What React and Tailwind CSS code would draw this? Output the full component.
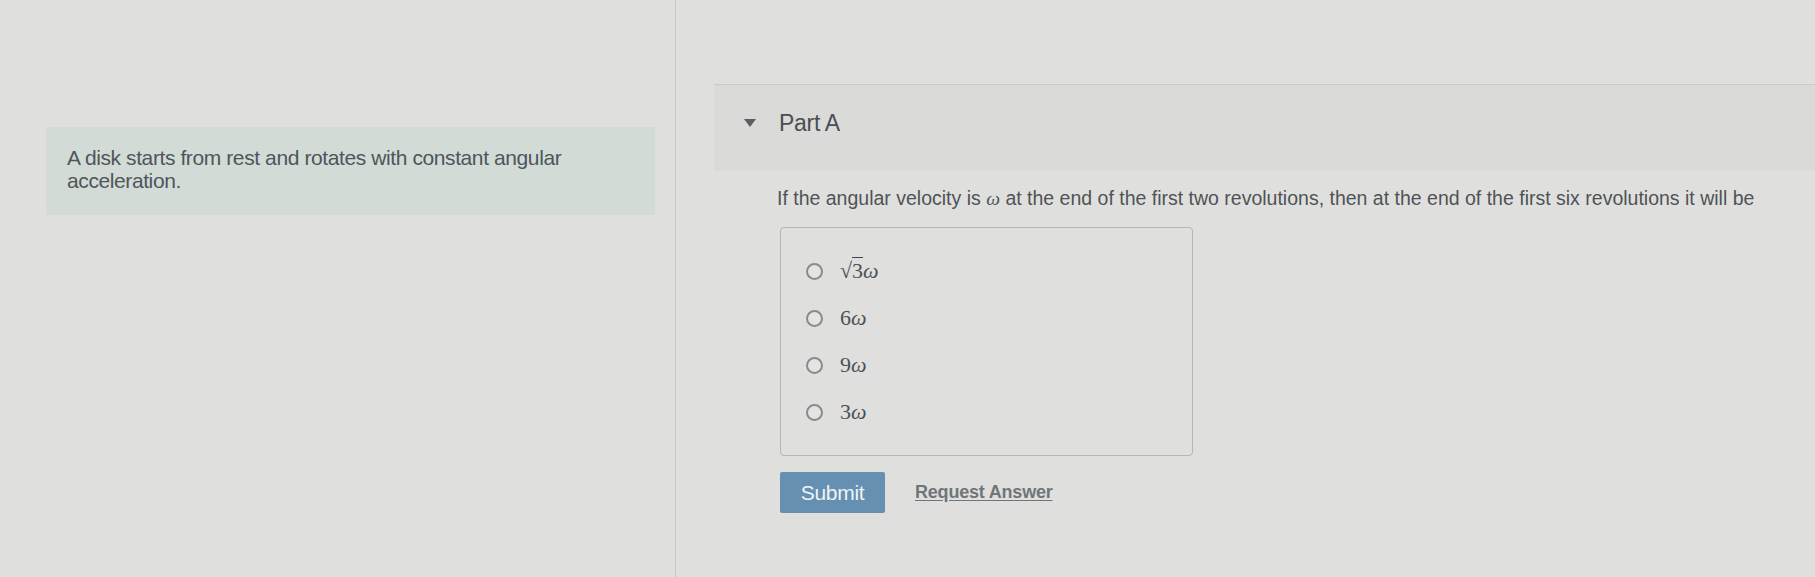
import React from 'react';

export default function App() {
  const options = [
    { id: 'a', label: <><span className="inline-block align-baseline">&radic;<span className="border-t border-[#444]">3</span></span><i>ω</i></> },
    { id: 'b', label: <>6<i>ω</i></> },
    { id: 'c', label: <>9<i>ω</i></> },
    { id: 'd', label: <>3<i>ω</i></> },
  ];

  return (
    <div
      className="w-[1815px] h-[577px] flex bg-[#dfe0dd] text-[#4a4d4f] overflow-hidden"
      style={{ fontFamily: '"Liberation Sans", Arial, sans-serif' }}
    >
      {/* Left column: problem intro */}
      <div className="w-[676px] shrink-0 h-full border-r border-[#c4c7c5] pt-[127px] pl-[46px] pr-[20px]">
        <div className="w-[609px] h-[88px] bg-[#d3dbd7] pl-[21px] pt-[19px] text-[21px] leading-[23px] text-[#50555a] tracking-[-0.4px]">
          A disk starts from rest and rotates with constant angular
          <br />
          acceleration.
        </div>
      </div>

      {/* Right column: Part A */}
      <div className="flex-1 pt-[84px] pl-[38px]">
        <div className="border-t border-[#c8cac8] bg-[#dadbd9] h-[87px] flex items-start pt-[24px] pl-[30px]">
          <svg width="12" height="9" viewBox="0 0 12 9" className="mt-[10px]">
            <polygon points="0,0 12,0 6,8" fill="#5a5e62" />
          </svg>
          <span className="ml-[23px] text-[23px] leading-[28px] text-[#4a4e52] tracking-[-0.3px]">Part A</span>
        </div>

        <div className="pl-[63px] mt-[15px]">
          <p className="text-[19.5px] leading-[24px] text-[#4f5357]">
            If the angular velocity is <i style={{ fontFamily: '"Liberation Serif", serif' }}>ω</i> at the end of the first two revolutions, then at the end of the first six revolutions it will be
          </p>

          <div className="ml-[3px] mt-[16px] w-[413px] h-[229px] border border-[#b3b6b4] rounded-[4px] pt-[31px] pl-[25px] flex flex-col gap-[23px]">
            {options.map((o) => (
              <label key={o.id} className="flex items-center h-[24px]">
                <span className="w-[17px] h-[17px] rounded-full border-2 border-[#878b8d] bg-[#e4e5e2]" />
                <span
                  className="ml-[17px] text-[22px] leading-[24px] text-[#4d5155]"
                  style={{ fontFamily: '"Liberation Serif", "Times New Roman", serif' }}
                >
                  {o.label}
                </span>
              </label>
            ))}
          </div>

          <div className="ml-[3px] mt-[16px] flex items-center">
            <button className="w-[105px] h-[41px] bg-[#6590b1] rounded-[2px] text-[#eef3f6] text-[21px] tracking-[-0.3px]">
              Submit
            </button>
            <a className="ml-[30px] text-[18px] font-bold text-[#6f7579] underline underline-offset-2 tracking-[-0.2px]">
              Request Answer
            </a>
          </div>
        </div>
      </div>
    </div>
  );
}
